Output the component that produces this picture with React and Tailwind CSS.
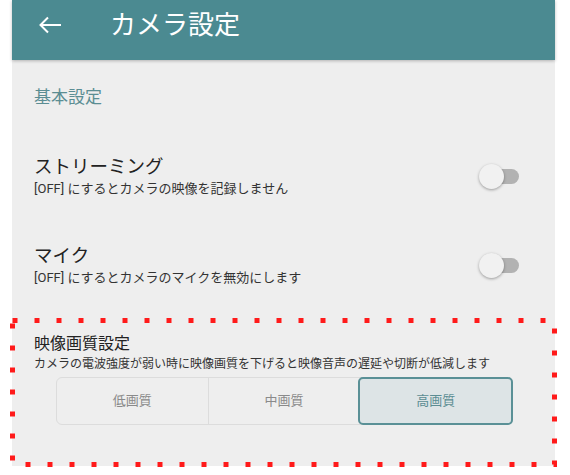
import React, { useState } from 'react'

const font = { fontFamily: '"Roboto", "Noto Sans CJK JP", sans-serif' }

const Toggle = ({ on, setOn }) => {
  return (
    <div onClick={() => setOn(!on)} className='relative w-[40px] h-[28px] flex items-center cursor-pointer'>
      <div className='absolute left-[12px] w-[28px] h-[15px] rounded-full bg-[#b2b2b2]'></div>
      <div className='absolute left-0 w-[25px] h-[25px] rounded-full bg-[#f1f1f1] shadow-[0_1px_3px_rgba(0,0,0,0.35)]'></div>
    </div>
  )
}

const SettingRow = ({ title, desc }) => {
  const [on, setOn] = useState(false)
  return (
    <div className='flex items-center justify-between pl-[22px] pr-[36px]'>
      <div className='flex flex-col'>
        <span className='text-[18.5px] leading-[26px] text-[#222]'>{title}</span>
        <span className='text-[13px] leading-[18px] text-[#333]'>{desc}</span>
      </div>
      <Toggle on={on} setOn={setOn} />
    </div>
  )
}

const App = () => {
  const [quality, setQuality] = useState(2)
  const options = ['低画質', '中画質', '高画質']

  return (
    <div style={font} className='w-[570px] h-[475px] bg-white relative overflow-hidden'>
      <div className='ml-[12px] w-[543px] h-[466px] bg-[#eeeeee] flex flex-col'>
        <div className='h-[60px] bg-[#4b8a91] shadow-[0_1px_3px_rgba(0,0,0,0.25)] z-10'>
          <div className='h-[49px] flex items-center'>
            <svg className='ml-[26px]' width='24' height='18' viewBox='0 0 24 18' fill='none' stroke='white' strokeWidth='2'>
              <path d='M23 9H2.5M10 1.5L2.5 9l7.5 7.5' />
            </svg>
            <span className='ml-[48px] text-[26px] leading-[32px] text-white'>カメラ設定</span>
          </div>
        </div>

        <span className='mt-[25px] pl-[22px] text-[17px] leading-[24px] text-[#5b8d93]'>基本設定</span>

        <div className='mt-[45px]'>
          <SettingRow title='ストリーミング' desc='[OFF] にするとカメラの映像を記録しません' />
        </div>
        <div className='mt-[45px]'>
          <SettingRow title='マイク' desc='[OFF] にするとカメラのマイクを無効にします' />
        </div>

        <div className='mt-[46px] pl-[22px] flex flex-col'>
          <span className='text-[16px] leading-[22px] text-[#222]'>映像画質設定</span>
          <span className='text-[12px] leading-[18px] text-[#333]'>カメラの電波強度が弱い時に映像画質を下げると映像音声の遅延や切断が低減します</span>
          <div className='mt-[4px] ml-[22px] w-[457px] h-[48px] flex rounded-[6px] border border-[#dcdcdc]'>
            {options.map((o, i) => {
              return (
                <div
                  key={'q-' + i}
                  onClick={() => setQuality(i)}
                  className={
                    quality == i
                      ? 'flex-1 flex items-center justify-center text-[13px] text-[#5b8d93] bg-[#dde4e6] border-2 border-[#5a9096] rounded-[5px] -m-px cursor-pointer'
                      : i > 0
                        ? 'flex-1 flex items-center justify-center text-[13px] text-[#8a8a8a] border-l border-[#dcdcdc] cursor-pointer'
                        : 'flex-1 flex items-center justify-center text-[13px] text-[#8a8a8a] cursor-pointer'
                  }
                >
                  {o}
                </div>
              )
            })}
          </div>
        </div>
      </div>

      <svg className='absolute left-0 top-0 pointer-events-none' width='570' height='475'>
        <rect x='12.5' y='320.5' width='542' height='144' fill='none' stroke='#ff1a1a' strokeWidth='5' strokeDasharray='5 17' />
      </svg>
    </div>
  )
}

export default App
